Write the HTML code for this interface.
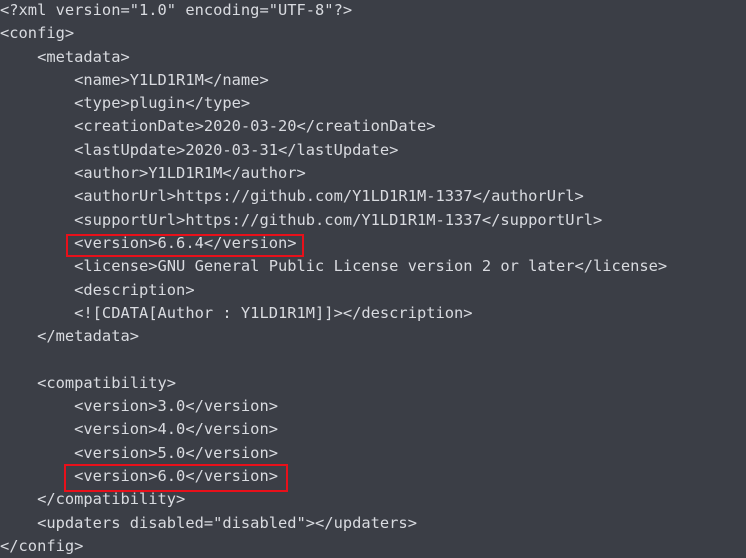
<!DOCTYPE html>
<html><head><style>
html,body{margin:0;padding:0;background:#3b3e46;width:746px;height:551px;overflow:hidden}
pre{margin:0;position:absolute;left:0px;top:-1px;font-family:"DejaVu Sans Mono","Liberation Mono",monospace;font-size:15.4px;line-height:23.3px;color:#d9dbe0}
.box{position:absolute;border:2px solid #e8101a;box-sizing:border-box}
</style></head><body>
<pre>&lt;?xml version="1.0" encoding="UTF-8"?&gt;
&lt;config&gt;
    &lt;metadata&gt;
        &lt;name&gt;Y1LD1R1M&lt;/name&gt;
        &lt;type&gt;plugin&lt;/type&gt;
        &lt;creationDate&gt;2020-03-20&lt;/creationDate&gt;
        &lt;lastUpdate&gt;2020-03-31&lt;/lastUpdate&gt;
        &lt;author&gt;Y1LD1R1M&lt;/author&gt;
        &lt;authorUrl&gt;https://github.com/Y1LD1R1M-1337&lt;/authorUrl&gt;
        &lt;supportUrl&gt;https://github.com/Y1LD1R1M-1337&lt;/supportUrl&gt;
        &lt;version&gt;6.6.4&lt;/version&gt;
        &lt;license&gt;GNU General Public License version 2 or later&lt;/license&gt;
        &lt;description&gt;
        &lt;![CDATA[Author : Y1LD1R1M]]&gt;&lt;/description&gt;
    &lt;/metadata&gt;

    &lt;compatibility&gt;
        &lt;version&gt;3.0&lt;/version&gt;
        &lt;version&gt;4.0&lt;/version&gt;
        &lt;version&gt;5.0&lt;/version&gt;
        &lt;version&gt;6.0&lt;/version&gt;
    &lt;/compatibility&gt;
    &lt;updaters disabled="disabled"&gt;&lt;/updaters&gt;
&lt;/config&gt;</pre>
<div class="box" style="left:66px;top:234px;width:238px;height:23px"></div>
<div class="box" style="left:64px;top:464px;width:224px;height:28px"></div>
</body></html>
